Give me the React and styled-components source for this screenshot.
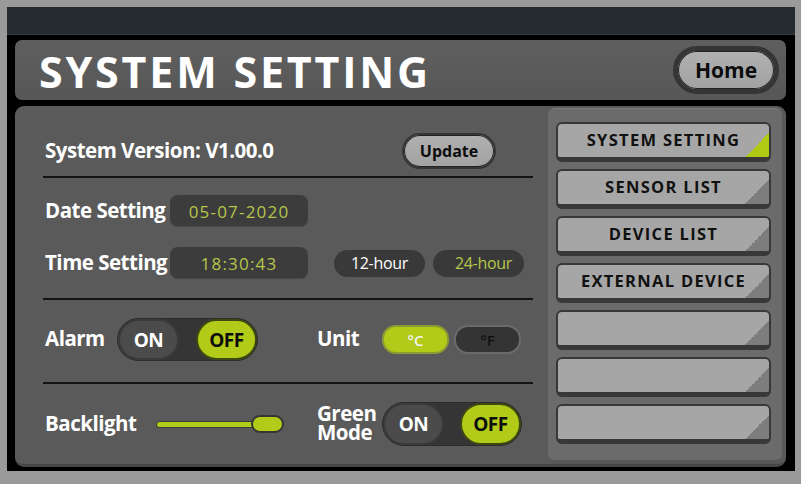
import React from "react";
import styled, { createGlobalStyle } from "styled-components";

const Global = createGlobalStyle`
  html, body { margin: 0; padding: 0; background: #9a9a9a; }
  body { font-family: "Open Sans", "Noto Sans", sans-serif; }
`;

const Screen = styled.div`
  margin: 7px 6px 0 7px;
  width: 788px;
  height: 464px;
  background: #000;
  display: flex;
  flex-direction: column;
  box-sizing: border-box;
`;

const TopBar = styled.div`
  height: 27px;
  background: #262a31;
  border-bottom: 1px solid #3a3d44;
  flex-shrink: 0;
`;

const Body = styled.div`
  flex: 1;
  display: flex;
  flex-direction: column;
  gap: 6px;
  padding: 5px 9px 4px 8px;
`;

const Header = styled.div`
  height: 60px;
  border-radius: 7px;
  background: linear-gradient(#5f5f5f, #575757);
  display: flex;
  align-items: center;
  justify-content: space-between;
  padding: 0 7px 0 24px;
  box-sizing: border-box;
`;

const Title = styled.h1`
  margin: 0;
  color: #fff;
  font-family: "Open Sans", sans-serif;
  font-weight: 700;
  font-size: 43px;
  letter-spacing: 2.8px;
  line-height: 1;
  padding-top: 3px;
`;

const PillButton = styled.button`
  width: ${(p) => p.w}px;
  height: ${(p) => p.h}px;
  border-radius: ${(p) => p.h / 2}px;
  border: ${(p) => p.ring}px solid #353535;
  background: linear-gradient(#b0b0b0, #a2a2a2);
  box-shadow: inset 0 0 0 1px #222;
  color: #0c0c0c;
  font-family: "Open Sans", sans-serif;
  font-weight: 700;
  font-size: ${(p) => p.fs}px;
  display: flex;
  align-items: center;
  justify-content: center;
  padding: 0;
  box-sizing: border-box;
`;

const Main = styled.div`
  flex: 1;
  display: flex;
  background: #5a5a5a;
  border-radius: 9px;
  border-bottom: 3px solid #474747;
  padding: 2px 4px 0 28px;
  box-sizing: border-box;
`;

const Left = styled.div`
  width: 490px;
  padding-top: 25px;
  display: flex;
  flex-direction: column;
`;

const Row = styled.div`
  display: flex;
  align-items: center;
  height: ${(p) => p.h}px;
  margin-top: ${(p) => p.mt || 0}px;
  padding-left: 2px;
`;

const Half = styled.div`
  display: flex;
  align-items: center;
  width: ${(p) => (p.w ? p.w + "px" : "auto")};
`;

const Divider = styled.div`
  height: 2px;
  background: #141414;
  margin-top: ${(p) => p.mt}px;
`;

const Label = styled.div`
  width: ${(p) => p.w}px;
  color: #fff;
  font-family: "Open Sans", sans-serif;
  font-weight: 700;
  font-size: 20.5px;
  letter-spacing: -0.5px;
  line-height: ${(p) => (p.stack ? "19px" : "1")};
  white-space: ${(p) => (p.stack ? "normal" : "nowrap")};
  flex-shrink: 0;
  margin-top: -2px;
`;

const Field = styled.div`
  width: 138px;
  height: 32px;
  border-radius: 8px;
  background: #3c3c3c;
  color: #b7c64a;
  font-family: "Open Sans", sans-serif;
  font-size: 17px;
  letter-spacing: 1.2px;
  display: flex;
  align-items: center;
  justify-content: center;
  box-shadow: inset 0 -1px 0 #474747;
`;

const HourChip = styled.div`
  width: 91px;
  height: 27px;
  border-radius: 14px;
  background: #393939;
  color: ${(p) => (p.active ? "#b7c64a" : "#fff")};
  font-family: "Open Sans", sans-serif;
  font-size: 16px;
  letter-spacing: -0.3px;
  display: flex;
  align-items: center;
  justify-content: center;
  margin-left: ${(p) => p.ml}px;
  padding-left: ${(p) => (p.active ? 10 : 0)}px;
  box-sizing: border-box;
`;

const Toggle = styled.div`
  width: ${(p) => p.w}px;
  height: ${(p) => p.h}px;
  border-radius: ${(p) => p.h / 2}px;
  background: #353535;
  border: 1px solid #2c2c2c;
  display: flex;
  justify-content: space-between;
  box-sizing: border-box;
  flex-shrink: 0;
`;

const Knob = styled.div`
  width: 61px;
  height: 100%;
  border-radius: 22px;
  box-sizing: border-box;
  border: 2px solid ${(p) => (p.on ? "#3d4a12" : "#3a3a3a")};
  background: ${(p) => (p.on ? "#b2ca18" : "#4b4b4b")};
  color: ${(p) => (p.on ? "#0d0d0d" : "#fff")};
  font-family: "Open Sans", sans-serif;
  font-weight: 700;
  font-size: 19px;
  display: flex;
  align-items: center;
  justify-content: center;
  letter-spacing: -0.5px;
`;

const UnitChip = styled.div`
  width: 67px;
  height: 29px;
  border-radius: 14px;
  box-sizing: border-box;
  border: 2px solid ${(p) => (p.on ? "#8c9c34" : "#6a6a6a")};
  background: ${(p) => (p.on ? "#b2ca18" : "#343434")};
  color: ${(p) => (p.on ? "#f4f4f4" : "#111")};
  font-family: "Open Sans", sans-serif;
  font-size: 15px;
  font-weight: 600;
  display: flex;
  align-items: center;
  justify-content: center;
  margin-left: ${(p) => p.ml || 0}px;
`;

const Slider = styled.div`
  width: 127px;
  height: 18px;
  margin-left: 22px;
  display: flex;
  align-items: center;
`;

const Track = styled.div`
  flex: 1;
  height: 5px;
  border-radius: 3px;
  background: #b2ca18;
  box-shadow: 0 0 0 1px #3b3b3b;
  margin-right: -8px;
`;

const Thumb = styled.div`
  width: 33px;
  height: 18px;
  border-radius: 9px;
  background: #b2ca18;
  border: 2px solid #363636;
  box-sizing: border-box;
  position: relative;
`;

const Sidebar = styled.div`
  width: 234px;
  height: 355px;
  margin-left: 15px;
  border-radius: 7px;
  background: #6b6b6b;
  border-top: 1px solid #7a7a7a;
  border-bottom: 3px solid #585858;
  padding: 13px 11px 0 8px;
  box-sizing: border-box;
  display: flex;
  flex-direction: column;
  gap: 7px;
`;

const NavButton = styled.div`
  height: 40px;
  box-sizing: border-box;
  border-radius: 6px;
  border: 2px solid #383838;
  border-bottom-width: 5px;
  background:
    linear-gradient(to bottom right, transparent 50%, ${(p) => (p.active ? "#b0ca14" : "#7d7d7d")} 50%) right bottom / 24px 24px no-repeat,
    #a6a6a6;
  color: #111;
  font-family: "Open Sans", sans-serif;
  font-weight: 700;
  font-size: 16.5px;
  letter-spacing: 1.3px;
  display: flex;
  align-items: center;
  justify-content: center;
  padding-bottom: 2px;
`;

const navItems = [
  { t: "SYSTEM SETTING", active: true },
  { t: "SENSOR LIST" },
  { t: "DEVICE LIST" },
  { t: "EXTERNAL DEVICE" },
  { t: "" },
  { t: "" },
  { t: "" },
];

export default function App() {
  return (
    <>
      <Global />
      <Screen>
        <TopBar />
        <Body>
          <Header>
            <Title>SYSTEM SETTING</Title>
            <PillButton w={106} h={48} ring={5} fs={21}>Home</PillButton>
          </Header>
          <Main>
            <Left>
              <Row h={36}>
                <Label w={357}>System Version: V1.00.0</Label>
                <PillButton w={94} h={36} ring={2} fs={16}>Update</PillButton>
              </Row>
              <Divider mt={7} />
              <Row h={32} mt={17}>
                <Label w={125}>Date Setting</Label>
                <Field>05-07-2020</Field>
              </Row>
              <Row h={32} mt={20}>
                <Label w={125}>Time Setting</Label>
                <Field>18:30:43</Field>
                <HourChip ml={26}>12-hour</HourChip>
                <HourChip ml={8} active>24-hour</HourChip>
              </Row>
              <Divider mt={19} />
              <Row h={43} mt={18}>
                <Half w={272}>
                  <Label w={72}>Alarm</Label>
                  <Toggle w={141} h={43}>
                    <Knob>ON</Knob>
                    <Knob on>OFF</Knob>
                  </Toggle>
                </Half>
                <Half>
                  <Label w={65}>Unit</Label>
                  <UnitChip on>°C</UnitChip>
                  <UnitChip ml={5}>°F</UnitChip>
                </Half>
              </Row>
              <Divider mt={21} />
              <Row h={44} mt={18}>
                <Half w={272}>
                  <Label w={90}>Backlight</Label>
                  <Slider>
                    <Track />
                    <Thumb />
                  </Slider>
                </Half>
                <Half>
                  <Label w={65} stack>Green Mode</Label>
                  <Toggle w={140} h={44}>
                    <Knob>ON</Knob>
                    <Knob on>OFF</Knob>
                  </Toggle>
                </Half>
              </Row>
            </Left>
            <Sidebar>
              {navItems.map((n, i) => (
                <NavButton key={i} active={n.active}>{n.t}</NavButton>
              ))}
            </Sidebar>
          </Main>
        </Body>
      </Screen>
    </>
  );
}
